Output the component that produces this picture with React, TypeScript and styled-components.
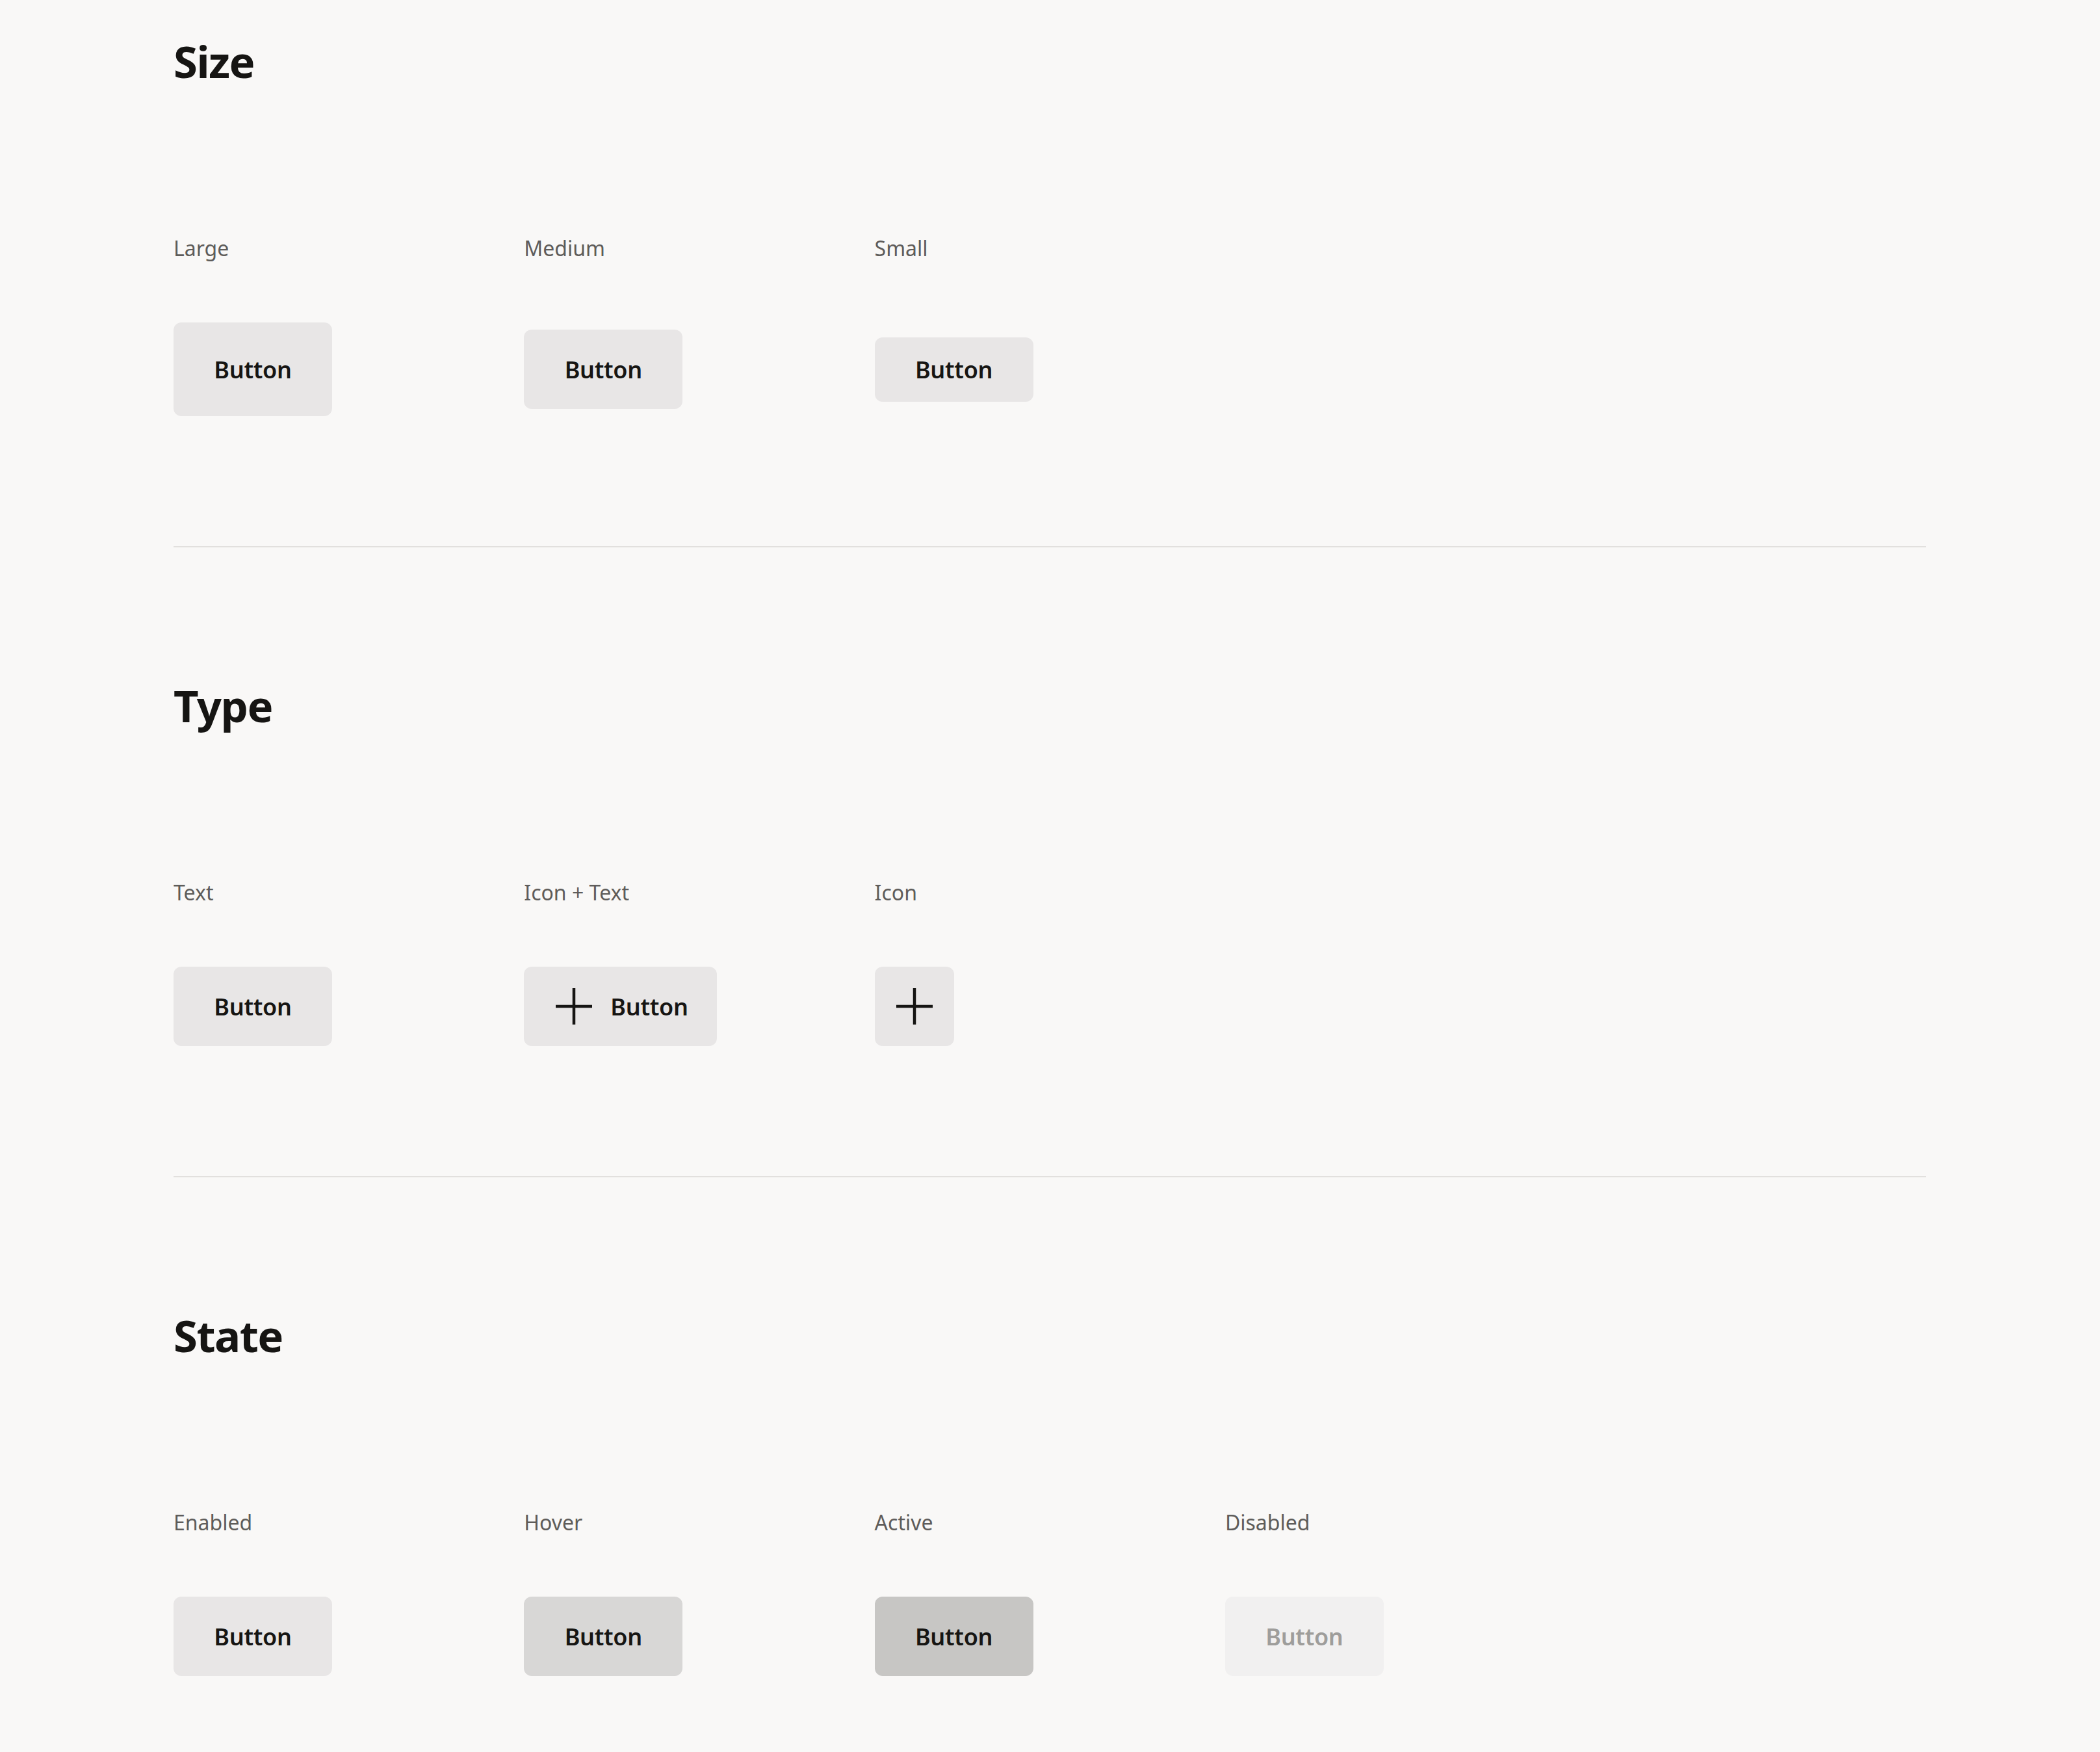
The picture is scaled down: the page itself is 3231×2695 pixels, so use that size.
import React from "react";
import styled, { createGlobalStyle, css } from "styled-components";

const GlobalStyle = createGlobalStyle`
  html, body {
    margin: 0;
    background: #f9f8f7;
  }
  body {
    font-family: "Noto Sans", "Open Sans", sans-serif;
    color: #161513;
  }
`;

type Size = "lg" | "md" | "sm";
type State = "enabled" | "hover" | "active" | "disabled";

const heights: Record<Size, number> = { lg: 144, md: 122, sm: 99 };

const fills: Record<State, string> = {
  enabled: "#e8e6e6",
  hover: "#d8d7d6",
  active: "#c7c6c4",
  disabled: "#f1f0f0"
};

const Page = styled.main({
  padding: "61px 268px 117px 267px",
  display: "flex",
  flexDirection: "column"
});

const Section = styled.section({
  display: "flex",
  flexDirection: "column"
});

const Heading = styled.h2({
  margin: "0 0 239px",
  fontSize: "67px",
  lineHeight: "66px",
  fontWeight: 700,
  letterSpacing: "-1.5px",
  color: "#161513"
});

const Grid = styled.div({
  display: "grid",
  gridTemplateColumns: "repeat(4, 539.3px)",
  gridTemplateRows: "auto auto",
  gridAutoFlow: "column",
  rowGap: "98px",
  alignItems: "center",
  justifyItems: "start"
});

const Label = styled.span({
  fontSize: "32px",
  lineHeight: "32px",
  fontWeight: 400,
  color: "#5e5c5a"
});

const Divider = styled.hr({
  margin: "200px 0 210px",
  border: 0,
  height: "2px",
  background: "#e2e0de"
});

const Button = styled.button<{ $size: Size; $state: State; $variant: "text" | "icontext" | "icon" }>`
  display: inline-flex;
  align-items: center;
  justify-content: center;
  box-sizing: border-box;
  height: ${p => heights[p.$size]}px;
  border: 0;
  border-radius: 12px;
  background: ${p => fills[p.$state]};
  color: ${p => (p.$state === "disabled" ? "#9e9d9b" : "#161513")};
  font-family: "Noto Sans", "Open Sans", sans-serif;
  font-size: 36px;
  font-weight: 600;
  letter-spacing: -0.3px;
  cursor: ${p => (p.$state === "disabled" ? "default" : "pointer")};
  ${p =>
    p.$variant === "text" &&
    css`
      min-width: 244px;
      padding: 0 40px;
    `}
  ${p =>
    p.$variant === "icontext" &&
    css`
      gap: 28px;
      padding: 0 44px 0 49px;
    `}
  ${p =>
    p.$variant === "icon" &&
    css`
      width: ${heights[p.$size]}px;
      padding: 0;
    `}
`;

const PlusIcon = () => (
  <svg width="56" height="56" viewBox="0 0 56 56" aria-hidden="true">
    <path d="M28 0V56M0 28H56" stroke="currentColor" strokeWidth="4.5" fill="none" />
  </svg>
);

type Item = {
  label: string;
  size: Size;
  state: State;
  variant: "text" | "icontext" | "icon";
};

const sections: { title: string; items: Item[] }[] = [
  {
    title: "Size",
    items: [
      { label: "Large", size: "lg", state: "enabled", variant: "text" },
      { label: "Medium", size: "md", state: "enabled", variant: "text" },
      { label: "Small", size: "sm", state: "enabled", variant: "text" }
    ]
  },
  {
    title: "Type",
    items: [
      { label: "Text", size: "md", state: "enabled", variant: "text" },
      { label: "Icon + Text", size: "md", state: "enabled", variant: "icontext" },
      { label: "Icon", size: "md", state: "enabled", variant: "icon" }
    ]
  },
  {
    title: "State",
    items: [
      { label: "Enabled", size: "md", state: "enabled", variant: "text" },
      { label: "Hover", size: "md", state: "hover", variant: "text" },
      { label: "Active", size: "md", state: "active", variant: "text" },
      { label: "Disabled", size: "md", state: "disabled", variant: "text" }
    ]
  }
];

const App = () => {
  return (
    <>
      <GlobalStyle />
      <Page>
        {sections.map((section, i) => (
          <React.Fragment key={section.title}>
            {i > 0 && <Divider />}
            <Section>
              <Heading>{section.title}</Heading>
              <Grid>
                {section.items.map(item => (
                  <React.Fragment key={item.label}>
                    <Label>{item.label}</Label>
                    <Button
                      $size={item.size}
                      $state={item.state}
                      $variant={item.variant}
                      disabled={item.state === "disabled"}
                      aria-label={item.variant === "icon" ? "Button" : undefined}
                    >
                      {item.variant !== "text" && <PlusIcon />}
                      {item.variant !== "icon" && "Button"}
                    </Button>
                  </React.Fragment>
                ))}
              </Grid>
            </Section>
          </React.Fragment>
        ))}
      </Page>
    </>
  );
};

export default App;
